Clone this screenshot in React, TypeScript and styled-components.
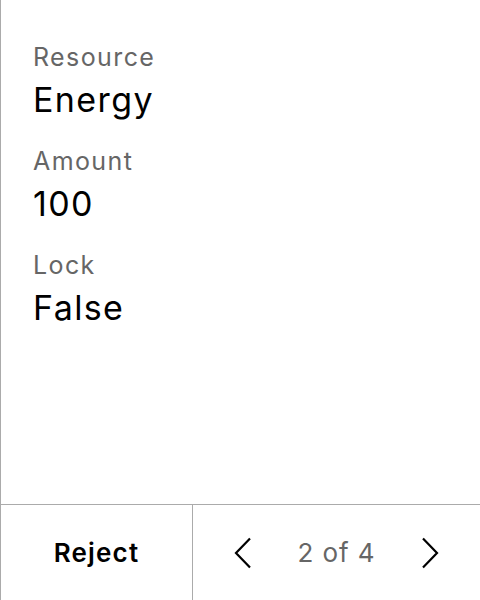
import React from "react";
import styled, { createGlobalStyle } from "styled-components";

const Global = createGlobalStyle`
  html, body { margin: 0; padding: 0; background: #fff; }
  body { font-family: Inter, "Noto Sans", sans-serif; }
  * { box-sizing: border-box; }
`;

const Panel = styled.div`
  height: 600px;
  width: 480px;
  display: flex;
  flex-direction: column;
  border-left: 1px solid #ababab;
  background: #fff;
`;

const Body = styled.div`
  flex: 1;
  padding: 41px 32px 0;
  display: flex;
  flex-direction: column;
  gap: 24px;
`;

const Field = styled.div`
  display: flex;
  flex-direction: column;
  gap: 6px;
`;

const Label = styled.div`
  font-size: 25px;
  line-height: 32px;
  letter-spacing: 1.4px;
  color: #666;
`;

const Value = styled.div`
  font-size: 34px;
  line-height: 42px;
  letter-spacing: 1.4px;
  color: #000;
`;

const Footer = styled.div`
  height: 96px;
  display: flex;
  border-top: 1px solid #ababab;
`;

const RejectCell = styled.button`
  width: 192px;
  border: none;
  border-right: 1px solid #ababab;
  background: transparent;
  font-family: inherit;
  font-size: 26px;
  font-weight: 600;
  letter-spacing: 1.2px;
  color: #000;
  padding: 0;
  cursor: pointer;
`;

const Pager = styled.div`
  flex: 1;
  display: flex;
  align-items: center;
  justify-content: space-between;
  padding: 0 26px;
`;

const NavButton = styled.button`
  width: 48px;
  height: 48px;
  border: none;
  background: transparent;
  padding: 0;
  display: flex;
  align-items: center;
  justify-content: center;
  cursor: pointer;
`;

const PageText = styled.span`
  font-size: 26px;
  letter-spacing: 0.9px;
  color: #666;
`;

const Chevron = ({ dir }: { dir: "left" | "right" }) => (
  <svg width="18" height="32" viewBox="0 0 18 32" fill="none">
    <polyline
      points={dir === "left" ? "16,1.5 2,16 16,30.5" : "2,1.5 16,16 2,30.5"}
      stroke="#000"
      strokeWidth="2.2"
    />
  </svg>
);

const fields = [
  { label: "Resource", value: "Energy" },
  { label: "Amount", value: "100" },
  { label: "Lock", value: "False" },
];

export default function App() {
  return (
    <>
      <Global />
      <Panel>
        <Body>
          {fields.map((f) => (
            <Field key={f.label}>
              <Label>{f.label}</Label>
              <Value>{f.value}</Value>
            </Field>
          ))}
        </Body>
        <Footer>
          <RejectCell>Reject</RejectCell>
          <Pager>
            <NavButton aria-label="Previous">
              <Chevron dir="left" />
            </NavButton>
            <PageText>2 of 4</PageText>
            <NavButton aria-label="Next">
              <Chevron dir="right" />
            </NavButton>
          </Pager>
        </Footer>
      </Panel>
    </>
  );
}
